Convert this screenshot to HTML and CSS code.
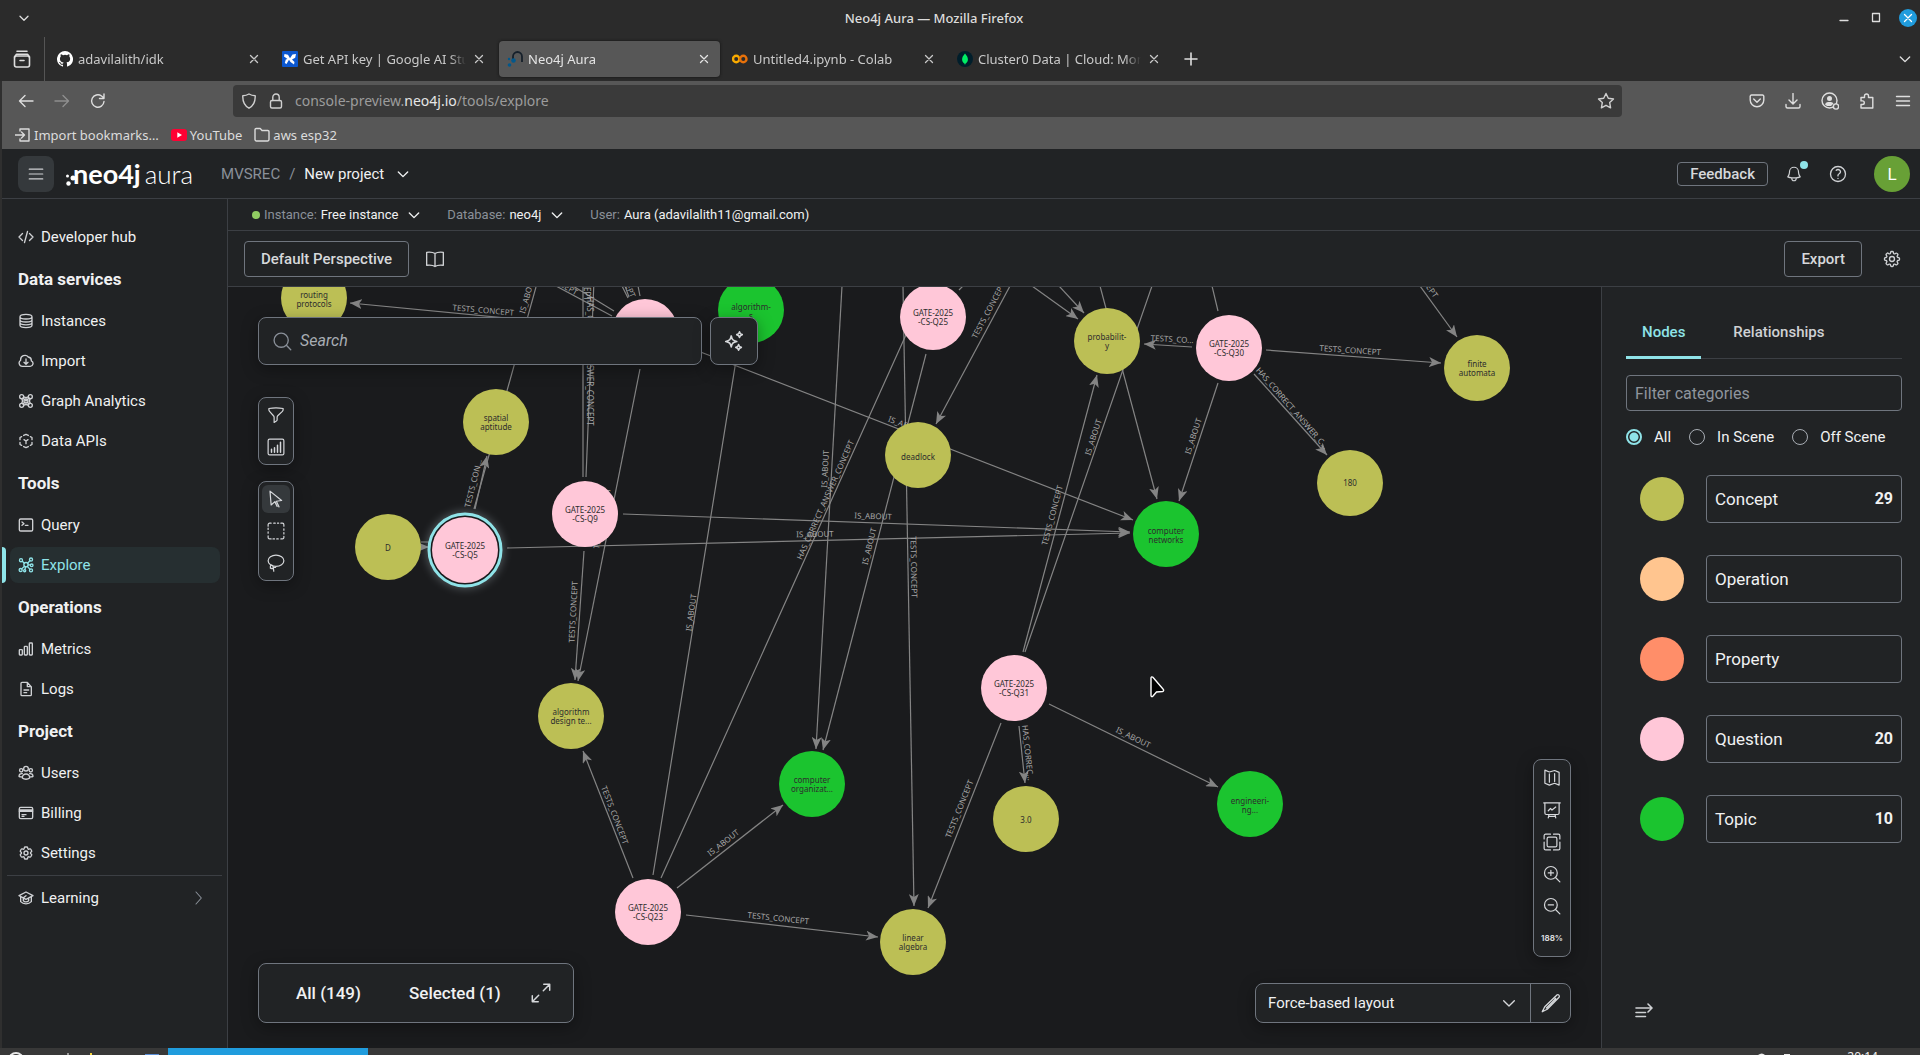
FILE: index.html
```html
<!DOCTYPE html>
<html lang="en">
<head>
<meta charset="utf-8">
<title>Neo4j Aura</title>
<link rel="stylesheet" href="styles.css">
</head>
<body>
<svg class="sprite" aria-hidden="true">
  <defs>
    <symbol id="i-down" viewBox="0 0 24 24"><path d="m4 8.500 8 8 8-8"/></symbol>
    <symbol id="i-close" viewBox="0 0 24 24"><path d="M5 5l14 14M19 5 5 19"/></symbol>
    <symbol id="i-menu" viewBox="0 0 24 24"><path d="M3 5.500h18M3 12h18M3 18.500h18"/></symbol>
    <symbol id="i-cog6" viewBox="0 0 24 24"><path d="M9.594 3.940c.09-.542.56-.94 1.110-.94h2.593c.55 0 1.020.398 1.110.94l.213 1.281c.063.374.313.686.645.87.074.04.147.083.22.127.325.196.72.257 1.075.124l1.217-.456a1.125 1.125 0 0 1 1.370.49l1.296 2.247a1.125 1.125 0 0 1-.26 1.431l-1.003.827c-.293.241-.438.613-.43.992a7.723 7.723 0 0 1 0 .255c-.008.378.137.75.43.991l1.004.827c.424.35.534.955.26 1.430l-1.298 2.247a1.125 1.125 0 0 1-1.369.491l-1.217-.456c-.355-.133-.75-.072-1.076.124a6.470 6.470 0 0 1-.22.128c-.331.183-.581.495-.644.869l-.213 1.281c-.09.543-.56.94-1.110.94h-2.594c-.55 0-1.019-.398-1.110-.94l-.213-1.281c-.062-.374-.312-.686-.644-.87a6.520 6.520 0 0 1-.22-.127c-.325-.196-.72-.257-1.076-.124l-1.217.456a1.125 1.125 0 0 1-1.369-.49l-1.297-2.247a1.125 1.125 0 0 1 .26-1.431l1.004-.827c.292-.24.437-.613.43-.991a6.932 6.932 0 0 1 0-.255c.007-.38-.138-.751-.43-.992l-1.004-.827a1.125 1.125 0 0 1-.26-1.430l1.297-2.247a1.125 1.125 0 0 1 1.370-.491l1.216.456c.356.133.751.072 1.076-.124.072-.044.146-.086.22-.128.332-.183.582-.495.644-.869l.214-1.280Z"/><circle cx="12" cy="12" r="3"/></symbol>
    <symbol id="i-cog8" viewBox="0 0 24 24"><path d="M10.343 3.940c.09-.542.56-.94 1.110-.94h1.093c.55 0 1.020.398 1.110.94l.149.894c.07.424.384.764.78.93.398.164.855.142 1.205-.108l.737-.527a1.125 1.125 0 0 1 1.450.12l.773.774c.39.389.44 1.002.12 1.450l-.527.737c-.25.35-.272.806-.107 1.204.165.397.505.71.93.78l.893.15c.543.09.94.559.94 1.109v1.094c0 .55-.397 1.020-.94 1.110l-.894.149c-.424.07-.764.383-.929.78-.165.398-.143.854.107 1.204l.527.738c.32.447.269 1.060-.12 1.450l-.774.773a1.125 1.125 0 0 1-1.449.12l-.738-.527c-.35-.25-.806-.272-1.203-.107-.398.165-.71.505-.781.929l-.149.894c-.09.542-.56.94-1.110.94h-1.094c-.55 0-1.019-.398-1.110-.94l-.148-.894c-.071-.424-.384-.764-.781-.93-.398-.164-.854-.142-1.204.108l-.738.527c-.447.32-1.060.269-1.450-.12l-.773-.774a1.125 1.125 0 0 1-.12-1.450l.527-.737c.25-.35.272-.806.108-1.204-.165-.397-.506-.71-.93-.78l-.894-.15c-.542-.09-.94-.56-.94-1.109v-1.094c0-.55.398-1.020.94-1.110l.894-.149c.424-.07.765-.383.93-.78.165-.398.143-.854-.108-1.204l-.526-.738a1.125 1.125 0 0 1 .12-1.450l.773-.773a1.125 1.125 0 0 1 1.450-.12l.737.527c.35.25.807.272 1.204.107.397-.165.71-.505.78-.929l.15-.894Z"/><circle cx="12" cy="12" r="3"/></symbol>
  </defs>
</svg>

<div class="titlebar">
  <button class="wm" aria-label="Window menu"><svg class="ico s12"><use href="#i-down"/></svg></button>
  <div class="wm-title">Neo4j Aura — Mozilla Firefox</div>
  <div class="wm-buttons">
    <button class="wm" aria-label="Minimize"><svg class="ico s12" viewBox="0 0 24 24"><path d="M4 17h16"/></svg></button>
    <button class="wm" aria-label="Maximize"><svg class="ico s12" viewBox="0 0 24 24"><path d="M5 3h14v16H5z"/></svg></button>
    <button class="wm wm-close" aria-label="Close"><svg class="ico s12"><use href="#i-close"/></svg></button>
  </div>
</div>

<div class="tabstrip">
  <button class="fv" aria-label="Firefox View"><svg class="ico s18" viewBox="0 0 18 18"><rect x="1.500" y="6" width="15" height="11" rx="2"/><path d="M1.500 7l2-2.800h11l2 2.800M4 1.200h10M7 10.500h4"/></svg></button>
  <div class="tabs">
    <div class="tab"><svg class="fav" viewBox="0 0 16 16"><path fill="#fff" d="M8 0a8 8 0 0 0-2.530 15.590c.4.070.55-.17.55-.38v-1.490c-2.010.37-2.530-.49-2.690-.94-.09-.23-.48-.94-.82-1.130-.28-.15-.68-.52-.01-.53.63-.010 1.080.58 1.230.82.72 1.210 1.870.87 2.330.66.07-.52.28-.87.51-1.070-1.780-.2-3.640-.89-3.640-3.950 0-.87.310-1.590.82-2.150-.08-.2-.36-1.020.08-2.120 0 0 .67-.21 2.200.82a7.400 7.400 0 0 1 4 0c1.530-1.040 2.200-.82 2.200-.82.44 1.100.16 1.920.08 2.120.51.560.82 1.270.82 2.150 0 3.070-1.870 3.750-3.650 3.950.29.250.54.73.54 1.480v2.200c0 .210.150.46.55.38A8 8 0 0 0 8 0z"/></svg><button class="tab-t">adavilalith/idk</button><button class="tab-x" aria-label="Close tab"><svg class="ico s12"><use href="#i-close"/></svg></button></div>
    <div class="tab"><svg class="fav" viewBox="0 0 16 16"><rect width="16" height="16" rx="1" fill="#0b57d0"/><path fill="#fff" d="M8 7.200 10.500 3.500 14 3l-.8 3.800L10 8.500l2.500 2.500-.5 2.500L8.500 11 7 8.800 4.500 13 2.800 12l1-3.500L5.500 8 2 5.500 2.500 3l3.500.8z"/></svg><button class="tab-t">Get API key | Google AI Studio</button><button class="tab-x" aria-label="Close tab"><svg class="ico s12"><use href="#i-close"/></svg></button></div>
    <div class="tab on"><svg class="fav" viewBox="0 0 16 16"><path d="M6 8V5.500a4.500 4.500 0 0 1 9 0V11" fill="none" stroke="#16202b" stroke-width="1.800"/><g fill="#02588c"><circle cx="6.500" cy="9.500" r="2.300"/><circle cx="2" cy="8" r="1.200"/><circle cx="2.500" cy="14" r="1.800"/></g></svg><button class="tab-t">Neo4j Aura</button><button class="tab-x" aria-label="Close tab"><svg class="ico s12"><use href="#i-close"/></svg></button></div>
    <div class="tab"><svg class="fav" viewBox="0 0 16 16"><g fill="none" stroke-width="2.400"><circle cx="4.200" cy="8" r="3.200" stroke="#f9ab00"/><circle cx="11.300" cy="8" r="3.200" stroke="#e8710a"/></g></svg><button class="tab-t">Untitled4.ipynb - Colab</button><button class="tab-x" aria-label="Close tab"><svg class="ico s12"><use href="#i-close"/></svg></button></div>
    <div class="tab"><svg class="fav" viewBox="0 0 16 16"><circle cx="8" cy="8" r="8" fill="#001e2b"/><path fill="#00ed64" d="M8 2.500c2 2.400 2.900 3.800 2.900 5.900 0 2-1.200 3.400-2.500 4.400L8 14l-.4-1.200C6.300 11.800 5.100 10.400 5.100 8.400 5.100 6.300 6 4.900 8 2.500z"/></svg><button class="tab-t">Cluster0 Data | Cloud: MongoDB</button><button class="tab-x" aria-label="Close tab"><svg class="ico s12"><use href="#i-close"/></svg></button></div>
  </div>
  <button class="newtab" aria-label="New tab"><svg class="ico s16" viewBox="0 0 16 16"><path d="M8 2v12M2 8h12"/></svg></button>
  <button class="alltabs" aria-label="List all tabs"><svg class="ico s14"><use href="#i-down"/></svg></button>
</div>

<div class="navbar">
  <div class="navbtns">
    <button aria-label="Back"><svg class="ico s16" viewBox="0 0 16 16"><path d="M15 8H1.500M7 2.500 1.500 8 7 13.500"/></svg></button>
    <button class="dim" aria-label="Forward"><svg class="ico s16" viewBox="0 0 16 16"><path d="M1 8h13.500M9 2.500 14.500 8 9 13.500"/></svg></button>
    <button aria-label="Reload"><svg class="ico s16" viewBox="0 0 16 16"><path d="M14 8.500A6.200 6.200 0 1 1 11.500 3l2.500 2M14 1v4.500H9.500"/></svg></button>
  </div>
  <div class="urlbar">
    <svg class="ico s16" viewBox="0 0 16 16"><path d="M8 1c2 1.200 4.200 1.700 6.200 1.700C14.500 9 12 13 8 15.200 4 13 1.500 9 1.800 2.700 3.800 2.700 6 2.200 8 1z"/></svg>
    <svg class="ico s16" viewBox="0 0 16 16"><rect x="2.500" y="7.500" width="11" height="7.500" rx="1.500"/><path d="M4.800 7.500V4.200a3.200 3.200 0 0 1 6.400 0v3.300"/></svg>
    <div class="url">console-preview.<b>neo4j.io</b>/tools/explore</div>
    <button aria-label="Bookmark this page"><svg class="ico s18" viewBox="0 0 18 18"><path d="m9 1.500 2.300 4.800 5.200.7-3.800 3.600.9 5.200L9 13.300l-4.600 2.500.9-5.200L1.500 7l5.200-.7z"/></svg></button>
  </div>
  <div class="navright">
    <button aria-label="Save to Pocket"><svg class="ico s16" viewBox="0 0 16 16"><path d="M2.500 2h11A1.300 1.300 0 0 1 14.800 3.300V7a6.800 6.800 0 0 1-13.600 0V3.300A1.300 1.300 0 0 1 2.500 2zM4.700 6 8 9.200 11.300 6"/></svg></button>
    <button aria-label="Downloads"><svg class="ico s16" viewBox="0 0 16 16"><path d="M8 .5v10M4 7l4 4 4-4M1 11.500v2A1.500 1.500 0 0 0 2.500 15h11a1.500 1.500 0 0 0 1.500-1.500v-2"/></svg></button>
    <button aria-label="Account"><svg class="ico s18" viewBox="0 0 18 18"><circle cx="8.500" cy="8.500" r="7.500"/><circle cx="8.500" cy="6.500" r="2.500" fill="currentColor" stroke="none"/><path d="M4 12.500a3 3 0 0 1 3-2.500h3a3 3 0 0 1 2.500 1.500L10 14H6z" fill="currentColor" stroke="none"/><circle cx="15" cy="14.500" r="2.600" fill="#575757"/></svg></button>
    <button aria-label="Extensions"><svg class="ico s16" viewBox="0 0 16 16"><path d="M5.500 4.500V3a2 2 0 0 1 4 0v1.500h4.300V15H2v-3.500h1.500a1.800 1.800 0 0 0 0-3.600H2V4.500z"/></svg></button>
    <button aria-label="Menu"><svg class="ico s16" viewBox="0 0 16 16"><path d="M1.500 3.500h13M1.500 8h13M1.500 12.500h13"/></svg></button>
  </div>
</div>

<div class="bookmarks">
  <a href="#import-bookmarks"><svg class="ico s16" viewBox="0 0 16 16"><path d="M5 4V2h9v12H5v-2M0 8h9.500M6.500 5l3 3-3 3"/></svg>Import bookmarks…</a>
  <a href="#youtube"><svg class="s16" viewBox="0 0 16 16"><rect y="2" width="16" height="12" rx="3" fill="#f03"/><path fill="#fff" d="M6.300 5.200v5.600L11 8z"/></svg>YouTube</a>
  <a href="#aws"><svg class="ico s16" viewBox="0 0 16 16"><path d="M1 12.500v-10A1.200 1.200 0 0 1 2.200 1.500h4l1.800 2h5.800A1.200 1.200 0 0 1 15 4.700v7.800a1.500 1.500 0 0 1-1.500 1.500h-11A1.500 1.500 0 0 1 1 12.500z"/></svg>aws esp32</a>
</div>

<div class="app">
  <header class="head">
    <button class="burger" aria-label="Toggle navigation"><svg class="ico s18"><use href="#i-menu"/></svg></button>
    <div class="logo">
      <svg class="logo-dots" viewBox="0 0 10 16"><g fill="#fff"><circle cx="7" cy="8" r="2.500"/><circle cx="1.500" cy="6" r="1.500"/><circle cx="2.500" cy="13.500" r="2.200"/></g></svg><span class="neo">neo4j</span><span class="aura">aura</span>
    </div>
    <nav class="crumbs"><a href="#org">MVSREC</a><span>/</span><button class="proj">New project<svg class="ico s14"><use href="#i-down"/></svg></button></nav>
    <div class="head-right">
      <button class="btn feedback">Feedback</button>
      <button class="plain bell" aria-label="Notifications"><svg class="ico s18" viewBox="0 0 24 24"><path d="M14.857 17.082a23.848 23.848 0 0 0 5.454-1.310A8.967 8.967 0 0 1 18 9.750V9A6 6 0 0 0 6 9v.75a8.967 8.967 0 0 1-2.312 6.022c1.733.64 3.560 1.085 5.455 1.310m5.714 0a24.255 24.255 0 0 1-5.714 0m5.714 0a3 3 0 1 1-5.714 0"/></svg><i></i></button>
      <button class="plain" aria-label="Help"><svg class="ico s20" viewBox="0 0 24 24"><path d="M9.879 7.519c1.171-1.025 3.071-1.025 4.242 0 1.172 1.025 1.172 2.687 0 3.712-.203.179-.43.326-.67.442-.745.361-1.450.999-1.450 1.827v.75M21 12a9 9 0 1 1-18 0 9 9 0 0 1 18 0Zm-9 5.250h.008v.008H12v-.008Z"/></svg></button>
      <button class="avatar" aria-label="Account">L</button>
    </div>
  </header>

  <div class="body">
    <nav class="side">
      <ul><li><a href="#dev"><svg class="ico s16" viewBox="0 0 24 24"><path d="M17.250 6.750 22.500 12l-5.250 5.250m-10.500 0L1.500 12l5.250-5.250m7.500-3-4.500 16.500"/></svg>Developer hub</a></li></ul>
      <h2>Data services</h2>
      <ul>
        <li><a href="#instances"><svg class="ico s16" viewBox="0 0 24 24"><path d="M21 5.500c0 2-4 3.500-9 3.500S3 7.500 3 5.500 7 2 12 2s9 1.500 9 3.500zv13c0 2-4 3.500-9 3.500s-9-1.500-9-3.500v-13M3 10c0 2 4 3.500 9 3.500s9-1.500 9-3.500M3 14.300c0 2 4 3.500 9 3.500s9-1.500 9-3.500"/></svg>Instances</a></li>
        <li><a href="#import"><svg class="ico s16" viewBox="0 0 24 24"><path d="M12 9v8m-3-3 3 3 3-3M6.500 20A5 5 0 0 1 4 10.800 6.500 6.500 0 0 1 15.500 6 5.500 5.500 0 0 1 20 11.800 4.300 4.300 0 0 1 18 20z"/></svg>Import</a></li>
        <li><a href="#analytics"><svg class="ico s16" viewBox="0 0 24 24"><circle cx="5.500" cy="5.500" r="3"/><circle cx="18.500" cy="5.500" r="3"/><circle cx="5.500" cy="18.500" r="3"/><circle cx="18.500" cy="18.500" r="3"/><circle cx="12" cy="12" r="3"/><path d="m7.500 7.500 9 9m0-9-9 9M8.500 5.500c2 1.500 5 1.500 7 0M5.500 8.500c1.500 2 1.500 5 0 7m3 3c2-1.500 5-1.500 7 0m3-10c-1.500 2-1.500 5 0 7"/></svg>Graph Analytics</a></li>
        <li><a href="#apis"><svg class="ico s16" viewBox="0 0 24 24"><path d="m8.500 3.700 3.500-1.700 3.500 1.700M3 10V6.800l2.500-1.300m13 0L21 6.800V10m0 4v3.200l-2.500 1.300m-13 0L3 17.200V14m5.500 6.300L12 22l3.500-1.700M12 16v-4m0 0 3-2m-3 2-3-2"/></svg>Data APIs</a></li>
      </ul>
      <h2>Tools</h2>
      <ul>
        <li><a href="#query"><svg class="ico s16" viewBox="0 0 24 24"><rect x="2" y="3" width="20" height="18" rx="2"/><path d="m6 7.500 3 2.500-3 2.500m5 0h4"/></svg>Query</a></li>
        <li><a class="on" href="#explore" aria-current="page"><svg class="ico s16" viewBox="0 0 24 24"><circle cx="4.500" cy="4.800" r="2.300"/><circle cx="19.500" cy="3.800" r="2.300"/><circle cx="20.500" cy="12.500" r="2"/><circle cx="19.500" cy="20" r="2.300"/><circle cx="4" cy="19.500" r="2.300"/><circle cx="10" cy="20.500" r="1.600"/><circle cx="12" cy="11.500" r="3.200"/><path d="m6.500 6.300 3 3m8.500-4-3.500 4m.8 2.500h3.200M14 14l4 4.500M9.800 13.800l-4.200 4m5.800-3-1 4"/></svg>Explore</a></li>
      </ul>
      <h2>Operations</h2>
      <ul>
        <li><a href="#metrics"><svg class="ico s16" viewBox="0 0 24 24"><rect x="2" y="13" width="4.500" height="8" rx="1"/><rect x="9.500" y="8" width="4.500" height="13" rx="1"/><rect x="17" y="3" width="4.500" height="18" rx="1"/></svg>Metrics</a></li>
        <li><a href="#logs"><svg class="ico s16" viewBox="0 0 24 24"><path d="M14 2H6a1.500 1.500 0 0 0-1.500 1.500v17A1.500 1.500 0 0 0 6 22h12.500a1.500 1.500 0 0 0 1.500-1.500V9zv6.500h6M9 13.500h7M9 17.500h4"/></svg>Logs</a></li>
      </ul>
      <h2>Project</h2>
      <ul>
        <li><a href="#users"><svg class="ico s16" viewBox="0 0 24 24"><circle cx="12" cy="5.500" r="3.500"/><circle cx="4.800" cy="8" r="2.500"/><circle cx="19.200" cy="8" r="2.500"/><path d="M6.500 19.500c-.5-8 11.500-8 11 0-3 2.500-8 2.500-11 0zM6.500 17.500c-2 .5-4 .2-5-.5 0-3 2-4.500 5-4M17.500 17.500c2 .5 4 .2 5-.5 0-3-2-4.500-5-4"/></svg>Users</a></li>
        <li><a href="#billing"><svg class="ico s16" viewBox="0 0 24 24"><rect x="2" y="3.500" width="20" height="17" rx="2"/><path d="M2 7.500h20M2 9.500h20M6 14.500h6M6 17h3"/></svg>Billing</a></li>
        <li><a href="#settings"><svg class="ico s16"><use href="#i-cog6"/></svg>Settings</a></li>
      </ul>
      <ul class="learn">
        <li><a href="#learning"><svg class="ico s16" viewBox="0 0 24 24"><path d="M1.500 8.500 12 3l10.500 5.500L12 14zM4 10v7.500C8 22 16 22 20 17.500V10M8 12v4c2 3 6 2 8 0v-2.500M12 8.500l-4 3"/></svg>Learning<svg class="ico s16 chev" viewBox="0 0 24 24"><path d="m9 3 8 9-8 9"/></svg></a></li>
      </ul>
    </nav>

    <main class="main">
      <div class="instbar">
        <button><i class="live"></i><span>Instance:</span> Free instance<svg class="ico s14"><use href="#i-down"/></svg></button>
        <button><span>Database:</span> neo4j<svg class="ico s14"><use href="#i-down"/></svg></button>
        <div class="user"><span>User:</span> Aura (adavilalith11@gmail.com)</div>
      </div>
      <div class="persp">
        <button class="btn tall">Default Perspective</button>
        <button class="plain" aria-label="Perspectives"><svg class="ico s20" viewBox="0 0 24 24"><path d="M12 5.500C10 4 7 3.500 2 4v15.500c5-.5 8 0 10 1.500 2-1.500 5-2 10-1.500V4c-5-.5-8 0-10 1.500zV21"/></svg></button>
        <button class="btn tall export">Export</button>
        <button class="plain" aria-label="Settings"><svg class="ico s20"><use href="#i-cog8"/></svg></button>
      </div>

      <div class="work">
        <div class="canvas">
          <svg class="graph" role="img" aria-label="Graph scene">
            <defs>
              <marker id="arr" viewBox="0 0 12 10" refX="12" refY="5" markerWidth="12" markerHeight="10" markerUnits="userSpaceOnUse" orient="auto"><path d="M0 0 12 5 0 10 3 5z" fill="#848484"/></marker>
              <filter id="glow" x="-50%" y="-50%" width="200%" height="200%"><feGaussianBlur stdDeviation="4"/></filter>
            </defs>
            <g transform="translate(-228 -287)">
              <g class="edges">
                <path d="M474 509 536 287M583 477V287M586 477 594 280M612 316 556 286M614 311 573 286M622 286 628 298M625 286 629 297M638 286 640 296M959 290 963 286M1212 286 1218 311M653 875 748 286M661 878 928 286M1025 652 1152 286M421 542H430"/>
                <g marker-end="url(#arr)">
                  <path d="M609 328 350 303"/><path d="M475 509 487 456"/><path d="M414 547H429"/><path d="M507 548 1130 533"/><path d="M623 514 1130 532"/><path d="M584 551 575 680"/><path d="M640 369 578 681"/><path d="M680 344 1133 520"/><path d="M842 286 816 749"/><path d="M926 354 823 750"/><path d="M903 286 914 906"/><path d="M1010 286 936 424"/><path d="M1032 286 1078 319"/><path d="M1059 286 1084 313"/><path d="M1100 286 1157 499"/><path d="M1023 652 1097 375"/><path d="M1218 383 1179 501"/><path d="M1192 347 1144 344"/><path d="M1266 350 1441 363"/><path d="M1254 374 1327 455"/><path d="M1420 286 1457 337"/><path d="M1049 704 1218 787"/><path d="M1019 726 1025 783"/><path d="M1001 723 928 908"/><path d="M633 878 583 751"/><path d="M677 888 783 805"/><path d="M686 915 878 937"/>
                </g>
              </g>
              <g class="rels">
                <text transform="translate(483 313) rotate(5)">TESTS_CONCEPT</text>
                <text transform="translate(530 296) rotate(-74)">IS_ABOUT</text>
                <text transform="translate(476 484) rotate(-76)">TESTS_CON…</text>
                <text transform="translate(815 537) rotate(-1)">IS_ABOUT</text>
                <text transform="translate(873 519) rotate(2)">IS_ABOUT</text>
                <text transform="translate(576 612) rotate(-87)">TESTS_CONCEPT</text>
                <text transform="translate(605 519) rotate(-79)">TESTS_CONCEPT</text>
                <text transform="translate(587 361) rotate(90)">HAS_CORRECT_ANSWER_CONCEPT</text>
                <text transform="translate(584 270) rotate(90)">TESTS_CONCEPT</text>
                <text transform="translate(549 280) rotate(30)">TESTS_CONCEPT</text>
                <text transform="translate(618 270) rotate(66)">TESTS_CONCEPT</text>
                <text transform="translate(905 428) rotate(21)">IS_ABOUT</text>
                <text transform="translate(694 613) rotate(-82)">IS_ABOUT</text>
                <text transform="translate(828 501) rotate(-66)">HAS_CORRECT_ANSWER_CONCEPT</text>
                <text transform="translate(828 469) rotate(-87)">IS_ABOUT</text>
                <text transform="translate(872 547) rotate(-76)">IS_ABOUT</text>
                <text transform="translate(911 567) rotate(89)">TESTS_CONCEPT</text>
                <text transform="translate(991 312) rotate(-62)">TESTS_CONCEPT</text>
                <text transform="translate(1096 438) rotate(-72)">IS_ABOUT</text>
                <text transform="translate(1055 516) rotate(-75)">TESTS_CONCEPT</text>
                <text transform="translate(1196 437) rotate(-72)">IS_ABOUT</text>
                <text transform="translate(1172 342) rotate(3)">TESTS_CO...</text>
                <text transform="translate(1350 353) rotate(4)">TESTS_CONCEPT</text>
                <text transform="translate(1290 410) rotate(49)">HAS_CORRECT_ANSWER_C…</text>
                <text transform="translate(1416 273) rotate(55)">TESTS_CONCEPT</text>
                <text transform="translate(1132 740) rotate(26)">IS_ABOUT</text>
                <text transform="translate(1025 753) rotate(84)">HAS_CORREC…</text>
                <text transform="translate(962 810) rotate(-68)">TESTS_CONCEPT</text>
                <text transform="translate(612 816) rotate(69)">TESTS_CONCEPT</text>
                <text transform="translate(725 845) rotate(-38)">IS_ABOUT</text>
                <text transform="translate(778 921) rotate(6)">TESTS_CONCEPT</text>
              </g>
              <circle cx="465" cy="550" r="39" fill="#9aa7ad" opacity=".4" filter="url(#glow)"/>
              <circle cx="465" cy="550" r="36" fill="#1a1b1d" stroke="#8fe3e8" stroke-width="3"/>
              <g class="q">
                <circle cx="465" cy="550" r="33"/><circle cx="585" cy="514" r="33"/><circle cx="645" cy="332" r="33"/><circle cx="933" cy="317" r="33"/><circle cx="1229" cy="348" r="33"/><circle cx="1014" cy="688" r="33"/><circle cx="648" cy="912" r="33"/>
              </g>
              <g class="c">
                <circle cx="314" cy="298" r="33"/><circle cx="496" cy="422" r="33"/><circle cx="388" cy="547" r="33"/><circle cx="571" cy="716" r="33"/><circle cx="918" cy="455" r="33"/><circle cx="1107" cy="341" r="33"/><circle cx="1477" cy="368" r="33"/><circle cx="1350" cy="483" r="33"/><circle cx="913" cy="942" r="33"/><circle cx="1026" cy="819" r="33"/>
              </g>
              <g class="t">
                <circle cx="751" cy="310" r="33"/><circle cx="1166" cy="534" r="33"/><circle cx="812" cy="784" r="33"/><circle cx="1250" cy="804" r="33"/>
              </g>
              <g class="names">
                <text x="465" y="549">GATE-2025<tspan x="465" dy="9">-CS-Q5</tspan></text>
                <text x="585" y="513">GATE-2025<tspan x="585" dy="9">-CS-Q9</tspan></text>
                <text x="933" y="316">GATE-2025<tspan x="933" dy="9">-CS-Q25</tspan></text>
                <text x="1229" y="347">GATE-2025<tspan x="1229" dy="9">-CS-Q30</tspan></text>
                <text x="1014" y="687">GATE-2025<tspan x="1014" dy="9">-CS-Q31</tspan></text>
                <text x="648" y="911">GATE-2025<tspan x="648" dy="9">-CS-Q23</tspan></text>
                <text x="314" y="298">routing<tspan x="314" dy="9">protocols</tspan></text>
                <text x="496" y="421">spatial<tspan x="496" dy="9">aptitude</tspan></text>
                <text x="388" y="551">D</text>
                <text x="571" y="715">algorithm<tspan x="571" dy="9">design te...</tspan></text>
                <text x="918" y="460">deadlock</text>
                <text x="1107" y="340">probabilit-<tspan x="1107" dy="9">y</tspan></text>
                <text x="1477" y="367">finite<tspan x="1477" dy="9">automata</tspan></text>
                <text x="1350" y="486">180</text>
                <text x="913" y="941">linear<tspan x="913" dy="9">algebra</tspan></text>
                <text x="1026" y="823">3.0</text>
                <text x="751" y="310">algorithm-<tspan x="751" dy="9">s</tspan></text>
                <text x="1166" y="534">computer<tspan x="1166" dy="9">networks</tspan></text>
                <text x="812" y="783">computer<tspan x="812" dy="9">organizat...</tspan></text>
                <text x="1250" y="804">engineeri-<tspan x="1250" dy="9">ng...</tspan></text>
              </g>
              <path d="M1151 678v17.500c0 1 1 1.500 1.800.8l3.700-4.300 6-.5c1.200-.2 1.500-1.500.7-2.200l-10.300-12c-.8-.8-1.900-.4-1.900.7z" fill="#000" stroke="#fff" stroke-width="1.400"/>
            </g>
          </svg>

          <div class="overlay top">
            <label class="search"><svg class="ico s20" viewBox="0 0 24 24"><circle cx="11" cy="11" r="8.500"/><path d="m17.500 17.500 5 5"/></svg><input type="text" placeholder="Search" aria-label="Search"></label>
            <button class="box ai" aria-label="Generate with AI"><svg class="ico s24" viewBox="0 0 24 24"><path d="M9 6.500c.8 4 1.800 5 6 6-4.200 1-5.200 2-6 6-.8-4-1.800-5-6-6 4.200-1 5.200-2 6-6zM18 2c.4 2 1 2.600 3 3-2 .4-2.600 1-3 3-.4-2-1-2.600-3-3 2-.4 2.600-1 3-3zM17 16c.4 2 1 2.600 3 3-2 .4-2.600 1-3 3-.4-2-1-2.600-3-3 2-.4 2.600-1 3-3z"/></svg></button>
          </div>
          <div class="overlay left">
            <div class="box tools">
              <button aria-label="Filter"><svg class="ico s20" viewBox="0 0 24 24"><path d="M12 2.500c3.300 0 6.500.3 9.500.8v1.500c0 1-.4 1.800-1 2.400L14.300 13a3 3 0 0 0-.8 2v3.300a2 2 0 0 1-1 1.800l-3 1.800V15a3 3 0 0 0-.9-2L3.400 7.200a3.400 3.400 0 0 1-.9-2.400V3.300c3-.5 6.200-.8 9.500-.8z"/></svg></button>
              <button aria-label="Slicer"><svg class="ico s20" viewBox="0 0 24 24"><rect x="1.500" y="1.500" width="21" height="21" rx="2"/><path d="M6 15v4m4-6v6m4-9.500V19m4-13.500V19" stroke-width="2"/></svg></button>
            </div>
            <div class="box tools">
              <button class="on" aria-label="Select" aria-pressed="true"><svg class="ico s20" viewBox="0 0 24 24"><path d="M12.500 15 16 22.500M4 1.500l1.500 18.500 5-4.500 3 6.500M4 1.500 19.500 14l-7 1"/></svg></button>
              <button aria-label="Marquee"><svg class="ico s20" viewBox="0 0 24 24"><path d="M1.500 5.500v-2a2 2 0 0 1 2-2h2m3.500 0h2m3 0h1.500m3 0h2a2 2 0 0 1 2 2v2m0 3.500v2m0 3v2m0 3v1.500a2 2 0 0 1-2 2h-2m-3.500 0h-2m-3 0H8m-2.500 0h-2a2 2 0 0 1-2-2v-2m0-3.500v-2m0-3V8"/></svg></button>
              <button aria-label="Lasso"><svg class="ico s20" viewBox="0 0 24 24"><ellipse cx="12" cy="9" rx="10.500" ry="7.500"/><path d="M5 15c-1 2-.5 4.500 1.500 4.500S9 17 7.500 15.500 4 15 4.500 19m4-1 .5 5m-1-5h3.500"/></svg></button>
            </div>
          </div>
          <div class="overlay sel box">
            <button>All (149)</button><button>Selected (1)</button>
            <button aria-label="Expand"><svg class="ico s24" viewBox="0 0 24 24"><path d="M14.500 9.500 21.500 2.500M15 2.500h6.500V9M9.500 14.500l-7 7M2.500 15v6.500H9"/></svg></button>
          </div>
          <div class="overlay right">
            <div class="box tools wide">
              <button aria-label="Minimap"><svg class="ico s20" viewBox="0 0 24 24"><path d="M8.500 4 2.500 1.500v17.500L8.500 21.500l7-2.500 6 2.500V4.500L15.500 2zM8.500 6.500v11M15.500 6v10.500"/></svg></button>
              <button aria-label="Presentation"><svg class="ico s20" viewBox="0 0 24 24"><path d="M1 2.500h22M2.500 2.500V16a2 2 0 0 0 2 2h15a2 2 0 0 0 2-2V2.500M7 22.500l1-4.500m9 4.500-1-4.500M7.500 20.500h9M7 13l3-3 2 2 5-4"/></svg></button>
              <button aria-label="Fit to screen"><svg class="ico s20" viewBox="0 0 24 24"><rect x="5.500" y="5.500" width="13" height="13" rx="2"/><path d="M1.500 8V3.500a2 2 0 0 1 2-2H10m4 0h6.500a2 2 0 0 1 2 2V8m0 4v8.500a2 2 0 0 1-2 2H14m-4 0H3.500a2 2 0 0 1-2-2V12"/></svg></button>
              <button aria-label="Zoom in"><svg class="ico s20" viewBox="0 0 24 24"><circle cx="10.500" cy="10.500" r="8.500"/><path d="m17 17 5.500 5.500M10.500 7v7M7 10.500h7"/></svg></button>
              <button aria-label="Zoom out"><svg class="ico s20" viewBox="0 0 24 24"><circle cx="10.500" cy="10.500" r="8.500"/><path d="m17 17 5.500 5.500M7 10.500h7"/></svg></button>
              <span class="pct">188%</span>
            </div>
            <div class="box layout">
              <select aria-label="Layout"><option>Force-based layout</option></select>
              <svg class="ico s16"><use href="#i-down"/></svg>
              <button aria-label="Edit layout"><svg class="ico s20" viewBox="0 0 24 24"><path d="M17.500 4 19 2.400a1.900 1.900 0 0 1 2.700 2.600L7.500 19.500 1.500 22.500l3-6zM16 5.500l2.600 2.600M6.500 18l11-11"/></svg></button>
            </div>
          </div>
        </div>

        <aside class="panel">
          <div class="ptabs" role="tablist"><button role="tab" class="on" aria-selected="true">Nodes</button><button role="tab" aria-selected="false">Relationships</button></div>
          <input class="filter" type="text" placeholder="Filter categories" aria-label="Filter categories">
          <div class="radios">
            <label><input type="radio" name="scope" checked>All</label>
            <label><input type="radio" name="scope">In Scene</label>
            <label><input type="radio" name="scope">Off Scene</label>
          </div>
          <ul class="cats">
            <li><i class="dot concept"></i><button>Concept<b>29</b></button></li>
            <li><i class="dot operation"></i><button>Operation</button></li>
            <li><i class="dot property"></i><button>Property</button></li>
            <li><i class="dot question"></i><button>Question<b>20</b></button></li>
            <li><i class="dot topic"></i><button>Topic<b>10</b></button></li>
          </ul>
          <button class="plain collapse" aria-label="Collapse panel"><svg class="ico s18" viewBox="0 0 18 18"><path d="M1 6h15.500M13 2l4 4-4 4M1 10.500h9.500M1 14.500h9.500"/></svg></button>
        </aside>
      </div>
    </main>
  </div>
</div>
<footer class="taskbar">
  <svg class="launch" viewBox="0 0 168 7"><circle cx="16" cy="12" r="7" fill="none" stroke="#e8e8e8" stroke-width="2"/><path d="M67 5h2v2h-2z" fill="#999"/><path d="M90 5h2v2h-2z" fill="#f5d43b"/><path d="M145 6h14v1h-14z" fill="#5b8fd8"/></svg>
  <span class="task"></span><svg class="tray" viewBox="0 0 100 7"><path d="M7 7q4-3 7 0zM33 6h6v1h-6z" fill="#eee"/></svg><time>20:14</time>
</footer>
</body>
</html>
```
FILE: styles.css
```css
* { box-sizing: border-box; }
:root {
  --ui: Roboto, "Liberation Sans", sans-serif;
  --chrome: "Noto Sans", "Open Sans", sans-serif;
  --bg: #212325;
  --line: #3c3f44;
  --edge: #6f757e;
  --teal: #8fe3e8;
}
body {
  margin: 0;
  height: 100vh;
  display: flex;
  flex-direction: column;
  overflow: hidden;
  background: #2b2b2b;
  color: #dedede;
  font: 13px/20px var(--chrome);
}
button, input, select { font: inherit; color: inherit; background: none; border: 0; padding: 0; margin: 0; }
button { display: flex; align-items: center; justify-content: center; white-space: nowrap; }
a { color: inherit; text-decoration: none; }
ul { list-style: none; margin: 0; padding: 0; }
.sprite { position: absolute; width: 0; height: 0; }
.ico { fill: none; stroke: currentColor; stroke-width: 1.6; stroke-linecap: round; stroke-linejoin: round; flex: none; }
.s12 { width: 12px; height: 12px; stroke-width: 2.6; }
.s14 { width: 14px; height: 14px; stroke-width: 2.4; }
.s16 { width: 16px; height: 16px; }
.s18 { width: 18px; height: 18px; }
.s20 { width: 20px; height: 20px; }
.s24 { width: 22px; height: 22px; }

/* browser window */
.titlebar { flex: none; height: 36px; padding: 0 3px 0 15px; display: flex; align-items: center; }
.wm { width: 18px; height: 18px; border-radius: 9px; }
.wm-title { flex: 1; text-align: center; font-weight: 500; color: #dcdcdc; }
.wm-buttons { display: flex; gap: 14px; }
.wm-close { background: #209cdd; color: #fff; }
.tabstrip { flex: none; height: 45px; display: flex; align-items: center; padding: 0 7px 0 1px; }
.fv { width: 44px; height: 44px; padding-right: 2px; border-right: 1px solid #555; }
.tabs { display: flex; gap: 4px; margin-left: 4px; }
.tab { width: 221px; height: 36px; padding: 0 8px; display: flex; align-items: center; gap: 5px; border-radius: 4px; color: #c9c9c9; }
.tab.on { background: #575757; color: #e4e4e4; box-shadow: 0 0 3px #111; }
.fav { width: 16px; height: 16px; flex: none; }
.tab-t { flex: 1; min-width: 0; justify-content: flex-start; overflow: hidden; -webkit-mask-image: linear-gradient(90deg, #000 90%, transparent); mask-image: linear-gradient(90deg, #000 90%, transparent); }
.tab-x { width: 16px; height: 16px; }
.newtab { width: 36px; height: 36px; margin-left: 3px; }
.alltabs { margin-left: auto; width: 16px; }
.navbar { flex: none; height: 40px; background: #575757; border-left: 2px solid #2f2f2f; display: flex; align-items: center; gap: 127px; padding: 0 9px 0 16px; }
.navbtns { display: flex; gap: 20px; }
.navbtns .dim { color: #8f8f8f; }
.navbar .ico, .bookmarks .ico { stroke-width: 1.4; }
.urlbar { flex: 1; height: 32px; border-radius: 4px; background: #3a3a3a; display: flex; align-items: center; gap: 11px; padding: 0 7px 0 8px; color: #d0d0d0; }
.url { flex: 1; color: #9c9c9c; font-size: 14px; }
.url b { font-weight: 400; color: #e6e6e6; }
.navright { display: flex; align-items: center; gap: 20px; }
.bookmarks { flex: none; height: 28px; background: #575757; border-left: 2px solid #2f2f2f; display: flex; align-items: center; gap: 12px; padding-left: 13px; color: #dcdcdc; }
.bookmarks a { display: flex; align-items: center; gap: 3px; }

/* application shell */
.app { flex: 1; min-height: 0; display: flex; flex-direction: column; background: var(--bg); border-left: 2px solid #2f2f2f; font: 15px/20px var(--ui); color: #f0f1f2; }
.head { flex: none; height: 50px; border-bottom: 1px solid var(--line); display: flex; align-items: center; padding: 0 10px 0 16px; }
.burger { width: 36px; height: 36px; border-radius: 8px; background: #35393c; color: #cfd1d4; }
.logo { display: flex; align-items: center; margin-left: 12px; height: 36px; color: #fff; }
.logo-dots { width: 10px; height: 16px; margin-top: 8px; margin-right: -3px; }
.neo { font: 700 27px/36px Lato, sans-serif; }
.aura { font: 300 26px/36px Lato, sans-serif; margin-left: 4px; }
.crumbs { display: flex; gap: 9px; margin-left: 28px; color: #8a9099; }
.proj { gap: 12px; color: #f0f1f2; }
.head-right { margin-left: auto; display: flex; align-items: center; }
.btn { border: 1px solid var(--edge); border-radius: 4px; font-weight: 500; color: #d6d8db; height: 24px; padding: 0 12px; }
.tall { height: 36px; padding: 0 16px; }
.plain { width: 36px; height: 36px; color: #cfd1d4; }
.bell { position: relative; margin: 0 8px; }
.bell i { position: absolute; top: 5px; right: 4px; width: 8px; height: 8px; border-radius: 4px; background: var(--teal); }
.avatar { width: 36px; height: 36px; border-radius: 18px; background: #68a036; color: #fff; font-size: 17px; margin-left: 18px; }
.body { flex: 1; min-height: 0; display: flex; }
.side { flex: none; width: 226px; border-right: 1px solid var(--line); padding: 20px 5px 0; }
.side ul { display: flex; flex-direction: column; gap: 4px; }
.side a { position: relative; display: flex; align-items: center; gap: 7px; height: 36px; margin: 0 2px 0 3px; padding: 0 8px; border-radius: 8px; }
.side a .ico { color: #cfd1d4; stroke-width: 2; }
.side a .chev { margin-left: auto; margin-right: 6px; color: #8a9099; stroke-width: 1.6; }
.side a.on { background: #262f31; color: var(--teal); }
.side a.on .ico { color: var(--teal); }
.side a.on::before { content: ""; position: absolute; left: -8px; top: 0; width: 4px; height: 36px; border-radius: 0 4px 4px 0; background: var(--teal); }
.side h2 { margin: 0; padding-left: 11px; font-size: 17px; line-height: 48px; font-weight: 700; }
.side .learn { margin-top: 4px; padding-top: 4px; border-top: 1px solid var(--line); }
.main { flex: 1; min-width: 0; display: flex; flex-direction: column; }
.instbar { flex: none; height: 32px; border-bottom: 1px solid var(--line); display: flex; align-items: center; gap: 26px; padding-left: 24px; font-size: 13px; }
.instbar button { gap: 4px; }
.instbar .ico { margin-left: 5px; }
.instbar span { color: #8a9099; }
.user { display: flex; gap: 4px; }
.live { width: 8px; height: 8px; border-radius: 4px; background: #90cb62; }
.persp { flex: none; height: 56px; border-bottom: 1px solid var(--line); display: flex; align-items: center; gap: 8px; padding: 0 10px 0 16px; }
.persp .export { margin-left: auto; margin-right: 4px; }
.work { flex: 1; min-height: 0; display: flex; }

/* graph scene */
.canvas { position: relative; flex: 1; min-width: 0; background: #1a1b1d; overflow: hidden; }
.graph { display: block; width: 100%; height: 100%; font-family: "Noto Sans", sans-serif; font-size: 8px; text-anchor: middle; }
.edges { stroke: #848484; stroke-width: 1.2; fill: none; }
.rels { fill: #a6a6a6; }
.names { fill: #2d2d2d; }
.q { fill: #ffc7d8; }
.c { fill: #bcbf55; }
.t { fill: #1bc42f; }
.overlay { position: absolute; }
.box { background: var(--bg); border: 1px solid var(--edge); border-radius: 8px; box-shadow: 0 4px 16px rgba(0,0,0,.35); color: #d6d8db; }
.top { left: 30px; top: 30px; display: flex; gap: 8px; }
.search { width: 444px; height: 48px; display: flex; align-items: center; gap: 8px; padding: 0 13px; background: var(--bg); border: 1px solid var(--edge); border-radius: 8px; box-shadow: 0 4px 16px rgba(0,0,0,.35); color: #8a9099; font-size: 16px; }
.search input { flex: 1; font-style: italic; outline: 0; }
.search input::placeholder { color: #a8adb4; }
.ai { width: 48px; height: 48px; }
.ai .ico { stroke-width: 1.8; }
.left { left: 30px; top: 110px; display: flex; flex-direction: column; gap: 16px; }
.tools { padding: 3px; display: flex; flex-direction: column; align-items: center; gap: 4px; }
.tools button { width: 28px; height: 28px; border-radius: 6px; }
.tools .ico { width: 18px; height: 18px; }
.tools button.on { background: #35393c; }
.sel { left: 30px; bottom: 25px; height: 60px; display: flex; align-items: center; gap: 48px; padding: 0 21px 0 37px; font-weight: 500; font-size: 17px; color: #f0f1f2; }
.sel button:last-child { margin-left: -19px; color: #d6d8db; }
.right { right: 30px; bottom: 25px; display: flex; flex-direction: column; align-items: flex-end; gap: 26px; }
.wide { width: 38px; padding: 4px; }
.pct { height: 28px; font: 700 8px/28px Inter, sans-serif; }
.layout { width: 316px; height: 40px; display: flex; align-items: center; overflow: hidden; }
.layout select { flex: 1; appearance: none; padding-left: 12px; height: 38px; outline: 0; color: #f0f1f2; }
.layout .ico { margin-right: 13px; stroke-width: 2; }
.layout button { width: 40px; height: 38px; border-left: 1px solid var(--edge); }
.layout button .ico { margin: 0; stroke-width: 1.6; }

/* legend panel */
.panel { flex: none; width: 319px; border-left: 1px solid var(--line); padding: 21px 18px 19px 24px; display: flex; flex-direction: column; }
.ptabs { display: flex; height: 51px; border-bottom: 1px solid var(--line); font-weight: 500; color: #cfd1d4; }
.ptabs button { padding: 0 16px; height: 51px; border-bottom: 3px solid transparent; }
.ptabs .on { color: var(--teal); border-color: var(--teal); }
.ptabs button + button { margin-left: 16px; }
.filter { margin-top: 16px; height: 36px; flex: none; border: 1px solid var(--edge); border-radius: 4px; padding: 0 8px; outline: 0; font-size: 16px; }
.filter::placeholder { color: #8f959d; }
.radios { display: flex; gap: 18px; height: 52px; align-items: center; }
.radios label { display: flex; align-items: center; gap: 12px; }
.radios input { appearance: none; width: 16px; height: 16px; border: 1px solid #a8adb4; border-radius: 8px; }
.radios input:checked { border: 2px solid var(--teal); background: radial-gradient(circle, var(--teal) 4px, transparent 5px); }
.cats { display: flex; flex-direction: column; gap: 32px; margin-top: 12px; font-size: 17px; }
.cats li { display: flex; align-items: center; gap: 22px; padding-left: 14px; }
.cats button { flex: 1; height: 48px; justify-content: space-between; border: 1px solid var(--edge); border-radius: 4px; padding: 0 8px; }
.cats b { font-size: 16px; }
.dot { width: 44px; height: 44px; border-radius: 22px; }
.concept { background: #bcbf55; }
.operation { background: #ffc58f; }
.property { background: #ff8e69; }
.question { background: #ffc7d8; }
.topic { background: #1bc42f; }
.collapse { margin-top: auto; }

.taskbar { flex: none; height: 7px; overflow: hidden; background: #383838; display: flex; color: #eee; font-size: 12px; line-height: 18px; }
.launch { width: 168px; height: 7px; flex: none; }
.task { width: 200px; background: #209cdd; }
.tray { width: 100px; height: 7px; margin-left: auto; margin-right: -4px; }
.taskbar time { margin-right: 42px; }
```
